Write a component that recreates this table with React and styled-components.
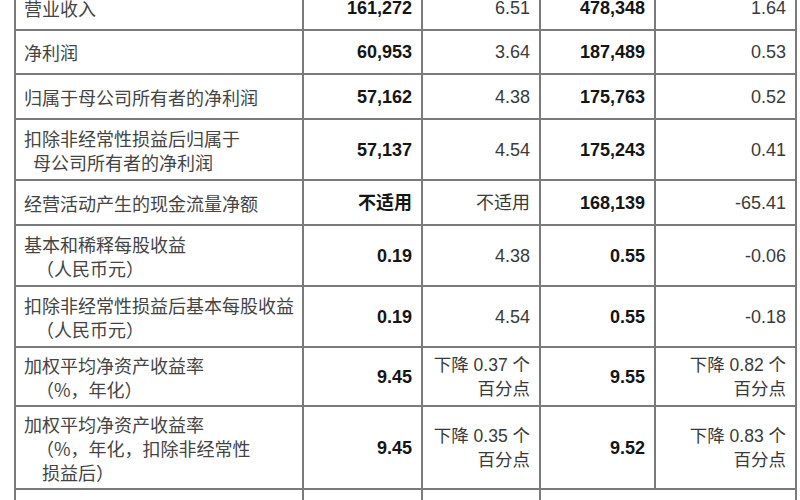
import styled, { createGlobalStyle } from 'styled-components';

const rows = [
  { label: [['营业收入', 0]], values: ['161,272', '6.51', '478,348', '1.64'], height: 44 },
  { label: [['净利润', 0]], values: ['60,953', '3.64', '187,489', '0.53'], height: 44 },
  { label: [['归属于母公司所有者的净利润', 0]], values: ['57,162', '4.38', '175,763', '0.52'], height: 45 },
  {
    label: [['扣除非经常性损益后归属于', 0], ['母公司所有者的净利润', 9]],
    values: ['57,137', '4.54', '175,243', '0.41'],
    height: 61,
  },
  { label: [['经营活动产生的现金流量净额', 0]], values: ['不适用', '不适用', '168,139', '-65.41'], height: 45 },
  {
    label: [['基本和稀释每股收益', 0], ['（人民币元）', 12]],
    values: ['0.19', '4.38', '0.55', '-0.06'],
    height: 61,
  },
  {
    label: [['扣除非经常性损益后基本每股收益', 0], ['（人民币元）', 12]],
    values: ['0.19', '4.54', '0.55', '-0.18'],
    height: 61,
  },
  {
    label: [['加权平均净资产收益率', 0], ['（%，年化）', 12]],
    values: ['9.45', ['下降 0.37 个', '百分点'], '9.55', ['下降 0.82 个', '百分点']],
    height: 59,
  },
  {
    label: [['加权平均净资产收益率', 0], ['（%，年化，扣除非经常性', 12], ['损益后）', 18]],
    values: ['9.45', ['下降 0.35 个', '百分点'], '9.52', ['下降 0.83 个', '百分点']],
    height: 83,
  },
];

export default function App() {
  return (
    <>
      <GlobalStyle />
      <Page>
        <Table>
          <colgroup>
            <col style={{ width: 288 }} />
            <col style={{ width: 119 }} />
            <col style={{ width: 118 }} />
            <col style={{ width: 115 }} />
            <col style={{ width: 141 }} />
          </colgroup>
          <tbody>
            {rows.map(row => (
              <Row key={row.label[0][0] + row.values[0]} $height={row.height}>
                <LabelCell>
                  {row.label.map(([text, indent]) => (
                    <LabelLine key={text} $indent={indent}>
                      {text}
                    </LabelLine>
                  ))}
                </LabelCell>
                {row.values.map((value, i) => (
                  <ValueCell key={i} $bold={i % 2 === 0}>
                    {Array.isArray(value)
                      ? value.map(line => <ValueLine key={line}>{line}</ValueLine>)
                      : value}
                  </ValueCell>
                ))}
              </Row>
            ))}
            <Row $height={60}>
              <LabelCell />
              <ValueCell />
              <ValueCell />
              <ValueCell colSpan={2} />
            </Row>
          </tbody>
        </Table>
      </Page>
    </>
  );
}

const GlobalStyle = createGlobalStyle`
  html, body {
    margin: 0;
    background: #fff;
    overflow: hidden;
  }
`;

const Page = styled.div`
  width: 800px;
  height: 500px;
  overflow: hidden;
  background: #fff;
`;

const Table = styled.table`
  table-layout: fixed;
  width: 781px;
  margin: -15px 0 0 14px;
  border-collapse: collapse;
  font-family: 'Liberation Sans', 'Noto Sans CJK SC', sans-serif;
`;

const Row = styled.tr`
  height: ${p => p.$height}px;
`;

const Cell = styled.td`
  border: 2px solid #7a7a7a;
  vertical-align: middle;
`;

const LabelCell = styled(Cell)`
  padding: 0 2px 0 8px;
  font-family: 'Noto Sans CJK SC', sans-serif;
  font-size: 18px;
  line-height: 24px;
  color: #444;
  white-space: nowrap;
`;

const LabelLine = styled.div`
  padding-left: ${p => p.$indent}px;
`;

const ValueCell = styled(Cell)`
  padding: 0 9px 0 4px;
  text-align: right;
  font-size: 18px;
  line-height: 24px;
  font-weight: ${p => (p.$bold ? 700 : 400)};
  color: ${p => (p.$bold ? '#151515' : '#3a3a3a')};
  white-space: nowrap;
`;

const ValueLine = styled.div`
  font-size: 17.5px;
`;
